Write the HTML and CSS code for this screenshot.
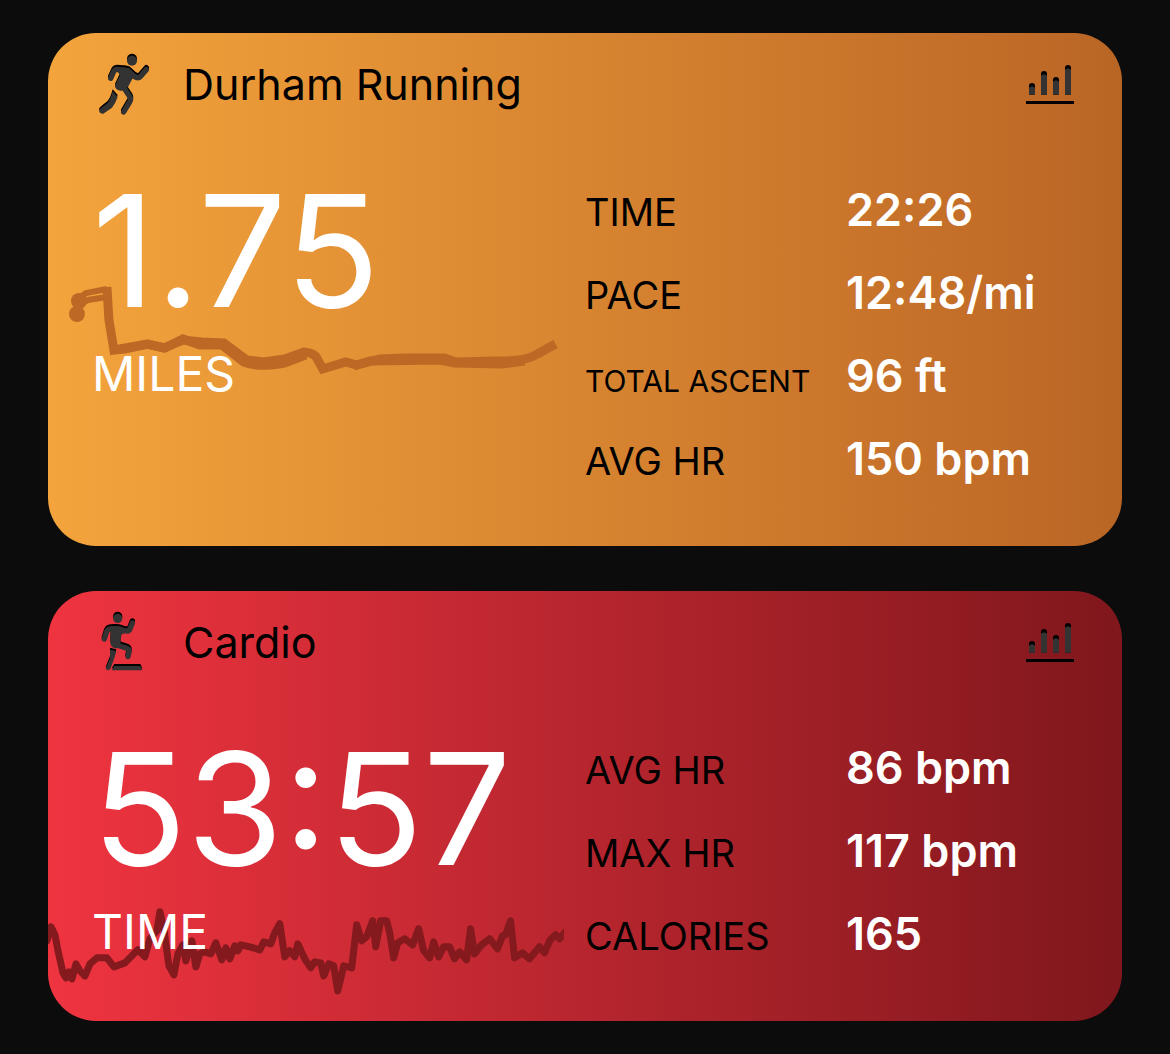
FILE: index.html
```
<!DOCTYPE html>
<html lang="en">
<head>
  <meta charset="UTF-8">
  <meta name="viewport" content="width=device-width, initial-scale=1">
  <title>Workouts</title>
  <link rel="stylesheet" href="styles.css">
</head>
<body>
  <!-- Shared icon shapes -->
  <svg class="defs" width="0" height="0" aria-hidden="true">
    <symbol id="run" viewBox="48 36 162 189">
      <circle cx="156" cy="59" r="15"/>
      <path class="limb" d="M92 112L102 90Q105 85 112 85L140 88L162 106Q174 114 182 106L199 86M128 135L150 168Q154 175 149 183L131 213"/>
      <path d="M108 84Q125 76 148 82L166 98L158 112L144 138L124 150Q104 146 105 134L120 103Z"/>
      <path d="M98 151L113 168Q106 188 96 200L70 218Q60 220 57 210Q58 205 82 187Q91 178 98 151Z"/>
    </symbol>
    <symbol id="step" viewBox="48 36 162 189">
      <circle cx="113" cy="58" r="14"/>
      <path class="limb" d="M73 120L80 98Q84 90 94 90L112 90L140 96Q148 97 150 89L157 72M110 138L140 148Q148 151 147 159L144 173"/>
      <path d="M88 85Q104 78 124 83L137 91L134 103L124 107L121 132L128 146L104 148Q90 142 91 128L92 104Z"/>
      <path d="M90 152L109 157L103 177L91 210Q84 217 77 210L90 177ZM103 201H181L187 214H95Z"/>
    </symbol>
    <symbol id="bars" viewBox="48 39 144 123">
      <path d="M57 131V105A9 9 0 0 1 75 105V131ZM93 131V69A9 9 0 0 1 111 69V131ZM129 131V87A9 9 0 0 1 147 87V131ZM165 131V51A9 9 0 0 1 183 51V131Z"/>
      <path class="shade" d="M57 131V110Q66 101 75 110V131ZM93 131V74Q102 65 111 74V131ZM129 131V92Q138 83 147 92V131ZM165 131V56Q174 47 183 56V131Z"/>
      <path d="M48 150H192V159H48Z"/>
    </symbol>
  </svg>

  <main class="workouts">
    <section class="card running">
      <svg class="trace" viewBox="48 33 516 513" preserveAspectRatio="none" aria-hidden="true">
        <circle cx="79" cy="301" r="8"/>
        <circle cx="77" cy="314" r="8"/>
        <path class="start" d="M78 299L86 293L107 289M80 304L88 300L107 297"/>
        <path class="route" d="M107 287L109 320L114 350L147 344L164 348L183 340L202 342L224 343L247 360L264 362L285 359L304 352Q316 353 318 360L323 369L346 362L357 365L380 359L405 358L445 358L456 362L495 361Q525 362 538 354L556 344"/>
        <path class="route" d="M114 350L125 349L148 344L165 348L183 339L200 345L222 345L244 362Q258 368 285 363L306 355M354 366L370 361L440 360L455 363L503 364L525 361"/>
      </svg>
      <header class="card-header">
        <svg class="activity" aria-hidden="true"><use href="#run" y="-2"/><use class="shade" href="#run"/></svg>
        <h2>Durham Running</h2>
        <button class="stats-button" type="button" aria-label="Show charts"><svg class="bars" aria-hidden="true"><use href="#bars"/></svg></button>
      </header>
      <div class="card-body">
        <div class="main-stat">
          <div class="number">1.75</div>
          <div class="unit">MILES</div>
        </div>
        <dl class="stats">
          <dt>TIME</dt><dd>22:26</dd>
          <dt>PACE</dt><dd>12:48/mi</dd>
          <dt class="small">TOTAL ASCENT</dt><dd>96 ft</dd>
          <dt>AVG HR</dt><dd>150 bpm</dd>
        </dl>
      </div>
    </section>

    <section class="card cardio">
      <svg class="trace" viewBox="48 591 516 429" preserveAspectRatio="none" aria-hidden="true">
        <path class="heart-rate" d="M47 940L51 926L55 934L58 950L63 972L66 977L69 971L72 978L76 963L80 970L85 975L90 963L97 957L107 957L114 966L125 962L132 955L138 949L145 956L150 938L157 930L160 911L164 928L169 965L174 974L178 953L183 944L186 960L192 940L196 966L200 953L205 951L211 953L216 942L222 959L226 947L230 958L235 945L238 950L241 944L250 946L260 949L264 941L271 943L275 932L280 923L285 956L290 950L295 956L298 943L305 958L311 967L315 961L321 962L324 975L329 963L334 965L338 990L344 965L352 967L357 924L362 940L367 936L373 920L376 946L381 920L387 920L390 932L394 957L398 942L405 938L413 944L419 928L424 950L430 957L434 941L439 956L444 946L450 946L455 958L460 951L467 959L471 928L475 953L482 944L490 938L498 948L503 935L506 934L511 920L515 957L523 952L530 958L540 946L545 952L550 940L556 934L560 938L566 931"/>
      </svg>
      <header class="card-header">
        <svg class="activity" aria-hidden="true"><use href="#step" y="-2"/><use class="shade" href="#step"/></svg>
        <h2>Cardio</h2>
        <button class="stats-button" type="button" aria-label="Show charts"><svg class="bars" aria-hidden="true"><use href="#bars"/></svg></button>
      </header>
      <div class="card-body">
        <div class="main-stat">
          <div class="number">53:57</div>
          <div class="unit">TIME</div>
        </div>
        <dl class="stats">
          <dt>AVG HR</dt><dd>86 bpm</dd>
          <dt>MAX HR</dt><dd>117 bpm</dd>
          <dt>CALORIES</dt><dd>165</dd>
        </dl>
      </div>
    </section>
  </main>
</body>
</html>
```
FILE: styles.css
```
* {
  box-sizing: border-box;
}

body {
  margin: 0;
  background: #0c0c0c;
  color: #000;
  font-family: Inter, "Liberation Sans", sans-serif;
}

.defs {
  position: absolute;
}

.workouts {
  display: flex;
  flex-direction: column;
  gap: 45px;
  padding: 33px 48px;
}

.card {
  position: relative;
  overflow: hidden;
  padding: 0 48px 46px;
  border-radius: 48px;
}

.running {
  background: linear-gradient(90deg, #f4a43c, #c06a27 92%, #b86524);
  --trace: #be6826;
}

.cardio {
  background: linear-gradient(90deg, #ef3440, #7f171c);
  --trace: #84191e;
}

/* route or heart rate line behind the main number */
.trace {
  position: absolute;
  top: 0;
  left: 0;
  width: 48%;
  height: 100%;
  fill: var(--trace);
}

.trace path {
  fill: none;
  stroke: var(--trace);
  stroke-width: 9;
}

.trace .start {
  stroke-width: 6;
}

.trace .heart-rate {
  stroke-width: 7;
  stroke-linecap: round;
  stroke-linejoin: round;
}

.card-header {
  position: relative;
  display: flex;
  align-items: center;
  gap: 33px;
  height: 102px;
}

.card-header h2 {
  flex: 1;
  margin: 0;
  font-size: 43px;
  font-weight: 400;
}

.activity {
  width: 54px;
  height: 63px;
  overflow: visible;
}

.limb {
  fill: none;
  stroke: currentColor;
  stroke-width: 16;
  stroke-linecap: round;
  stroke-linejoin: round;
}

.shade {
  color: #333;
  fill: #333;
}

.stats-button {
  padding: 0;
  border: 0;
  background: none;
  color: #000;
  cursor: pointer;
}

.bars {
  display: block;
  width: 48px;
  height: 41px;
}

.card-body {
  position: relative;
  display: grid;
  grid-template-columns: 1fr 1fr;
  padding-top: 33px;
}

.main-stat {
  margin-left: -4px;
  color: #fff;
}

.number {
  font-size: 156px;
  line-height: 166px;
}

.unit {
  font-size: 48px;
  line-height: 80px;
}

.stats {
  display: grid;
  grid-template-columns: 261px 1fr;
  align-items: baseline;
  margin: 0;
}

.stats dt {
  font-size: 38px;
}

.stats .small {
  font-size: 30px;
}

.stats dd {
  margin: 0;
  color: #fff;
  font-size: 45px;
  font-weight: 600;
  line-height: 83px;
  white-space: nowrap;
}

@media (max-width: 1000px) {
  .card-body {
    grid-template-columns: 1fr;
  }
}
```
